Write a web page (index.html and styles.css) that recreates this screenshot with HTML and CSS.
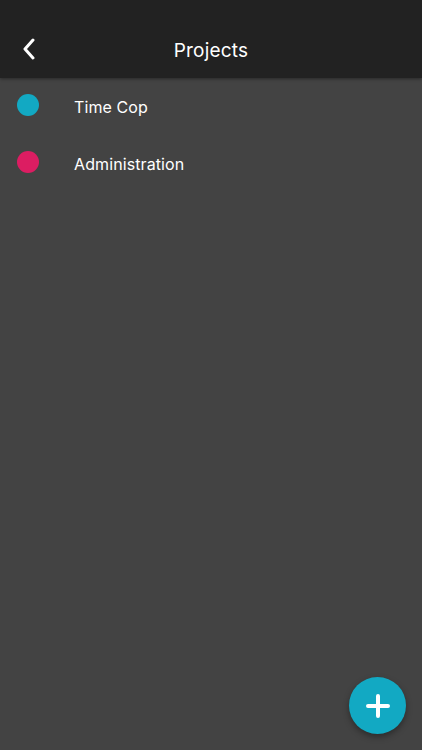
FILE: index.html
```html
<html><head>
    <link rel="stylesheet" href="styles.css">
</head><body>
    <div class="header">
        <div class="back">
            <svg width="16" height="22" viewBox="0 0 16 22"><path d="M12 2 L4 11 L12 20" fill="none" stroke="#fff" stroke-width="3" stroke-linecap="round" stroke-linejoin="round"/></svg>
        </div>
        <div class="title">Projects</div>
    </div>
    <div class="list">
        <div class="row">
            <span class="dot cyan"></span>
            <span class="name">Time Cop</span>
        </div>
        <div class="row">
            <span class="dot pink"></span>
            <span class="name">Administration</span>
        </div>
    </div>
    <div class="fab">
        <svg width="24" height="24" viewBox="0 0 24 24"><path d="M12 2 V22 M2 12 H22" stroke="#fff" stroke-width="4" stroke-linecap="round"/></svg>
    </div>
</body></html>
```

FILE: styles.css
```css
body {
    margin: 0;
    height: 750px;
    background: #434343;
    font-family: 'Inter', 'Liberation Sans', sans-serif;
    color: #fff;
    overflow: hidden;
    position: relative;
}

.header {
    height: 78px;
    background: #222222;
    position: relative;
    box-shadow: 0 1px 3px rgba(0, 0, 0, 0.4);
}

.back {
    position: absolute;
    left: 21px;
    top: 38px;
}

.title {
    text-align: center;
    padding-top: 39px;
    font-size: 19px;
    letter-spacing: 0.2px;
}

.list {
    margin-top: -2px;
}

.row {
    display: flex;
    align-items: center;
    height: 57px;
    padding-left: 17px;
}

.dot {
    width: 22px;
    height: 22px;
    border-radius: 50%;
    margin-right: 35px;
}

.cyan { background: #12a9c3; }
.pink { background: #dc1d62; }

.name {
    font-size: 16px;
    letter-spacing: 0.1px;
    margin-top: 4px;
}

.fab {
    position: absolute;
    left: 349px;
    top: 677px;
    width: 57px;
    height: 57px;
    border-radius: 50%;
    background: #12a9c3;
    display: flex;
    align-items: center;
    justify-content: center;
    box-shadow: 0 3px 6px rgba(0, 0, 0, 0.35);
}
```
